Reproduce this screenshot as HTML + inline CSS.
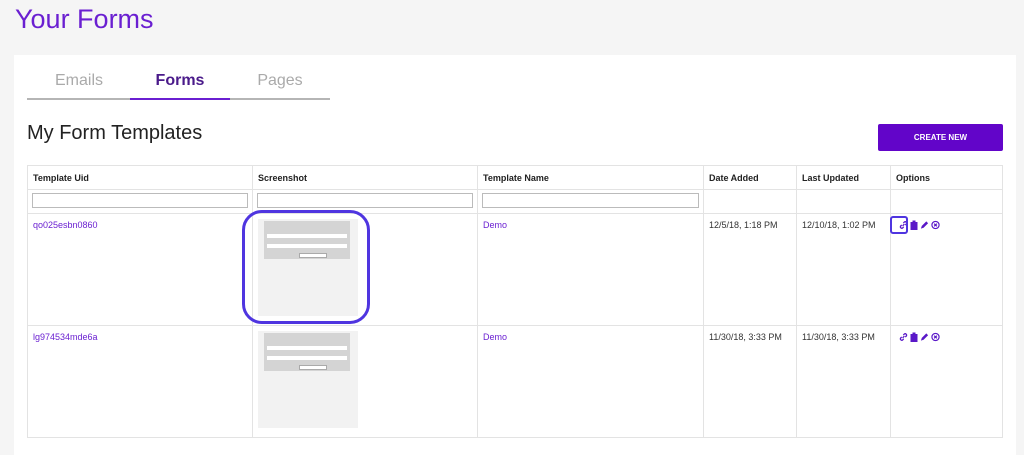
<!DOCTYPE html><html><head><style>
*{box-sizing:border-box;margin:0;padding:0}
body{width:1024px;height:434px;overflow:hidden;background:#f5f5f5;font-family:"Liberation Sans",sans-serif;position:relative}
.a{position:absolute}
h1{position:absolute;left:15px;top:4px;font-weight:400;font-size:27px;color:#6a1fd1}
.card{left:14px;top:55px;width:1002px;height:400px;background:#fff}
.tab{top:72px;font-size:16px;color:#aaa;text-align:center;width:102px}
table{position:absolute;left:27px;top:165px;border-collapse:collapse;font-size:9px}
td{border:1px solid #e3e3e3;vertical-align:top;padding:6px 5px;color:#333}
th{border:1px solid #e3e3e3;text-align:left;padding:0 5px;height:24px;font-size:9px;color:#222}
.f td{height:24px;padding:3px 4px}
.f input{width:100%;height:15px;border:1px solid #bbb}
a{color:#6a1fd1;text-decoration:none}
.shot{width:100px;height:97px;background:#f2f2f2;margin-left:0;position:relative}
.shot .g{position:absolute;left:6px;top:2px;width:86px;height:38px;background:#d4d4d4}
.shot .l{position:absolute;left:9px;width:80px;height:4px;background:#fff}
.shot .b{position:absolute;left:35px;top:32px;width:28px;height:5px;background:#fff;border:1px solid #aaa}
svg{vertical-align:top;margin-right:2px}
</style></head><body>
<h1>Your Forms</h1>
<div class="a card"></div>
<div class="a tab" style="left:28px">Emails</div>
<div class="a tab" style="left:129px;color:#4a1a8a;font-weight:700">Forms</div>
<div class="a tab" style="left:229px">Pages</div>
<div class="a" style="left:27px;top:98px;width:303px;height:2px;background:#b5b5b5"></div>
<div class="a" style="left:130px;top:98px;width:100px;height:2px;background:#6a1fd1"></div>
<div class="a" style="left:27px;top:122px;font-size:20px;color:#222">My Form Templates</div>
<div class="a" style="left:878px;top:124px;width:125px;height:27px;background:#6205c9;color:#fff;font-size:8px;font-weight:700;text-align:center;line-height:27px;border-radius:2px">CREATE NEW</div>
<table>
<tr><th style="width:225px">Template Uid</th><th style="width:225px">Screenshot</th><th style="width:226px">Template Name</th><th style="width:93px">Date Added</th><th style="width:94px">Last Updated</th><th style="width:112px">Options</th></tr>
<tr class="f"><td><input></td><td><input></td><td><input></td><td></td><td></td><td></td></tr>
<tr style="height:112px"><td><a>qo025esbn0860</a></td><td style="padding:5px 0 0 5px"><div class="shot"><div class="g"><div class="l" style="top:13px;left:3px"></div><div class="l" style="top:23px;left:3px"></div><div class="b"></div></div></div></td><td><a>Demo</a></td><td>12/5/18, 1:18 PM</td><td>12/10/18, 1:02 PM</td><td class="o"></td></tr>
<tr style="height:112px"><td><a>lg974534mde6a</a></td><td style="padding:5px 0 0 5px"><div class="shot"><div class="g"><div class="l" style="top:13px;left:3px"></div><div class="l" style="top:23px;left:3px"></div><div class="b"></div></div></div></td><td><a>Demo</a></td><td>11/30/18, 3:33 PM</td><td>11/30/18, 3:33 PM</td><td class="o"></td></tr>
</table>
<div class="a" style="left:242px;top:210px;width:128px;height:114px;border:3px solid #4f35e0;border-radius:20px"></div>
<div class="a" style="left:890px;top:216px;width:18px;height:18px;border:2px solid #4f35e0;border-radius:3px"></div>
<script>
var ic='<svg width="9" height="10" viewBox="0 0 10 10"><path d="M4 6l2-2M3 5L1.8 6.2a1.6 1.6 0 002.2 2.2L5.2 7M7 5l1.2-1.2A1.6 1.6 0 006 1.6L4.8 2.8" stroke="#5a18c8" stroke-width="1.4" fill="none"/></svg><svg width="8" height="10" viewBox="0 0 8 10"><rect x="0.5" y="2" width="7" height="8" fill="#5a18c8"/><rect x="2.5" y="0.5" width="3" height="2.5" fill="#5a18c8"/></svg><svg width="9" height="10" viewBox="0 0 10 10"><path d="M1 9l1-3 5-5 2 2-5 5z" fill="#5a18c8"/></svg><svg width="9" height="10" viewBox="0 0 10 10"><circle cx="5" cy="5" r="4" stroke="#5a18c8" stroke-width="1.3" fill="none"/><path d="M3.5 3.5l3 3M6.5 3.5l-3 3" stroke="#5a18c8" stroke-width="1.3"/></svg>';
document.querySelectorAll('.o').forEach(function(e){e.innerHTML=ic;e.style.paddingLeft='8px'});
</script>
</body></html>
